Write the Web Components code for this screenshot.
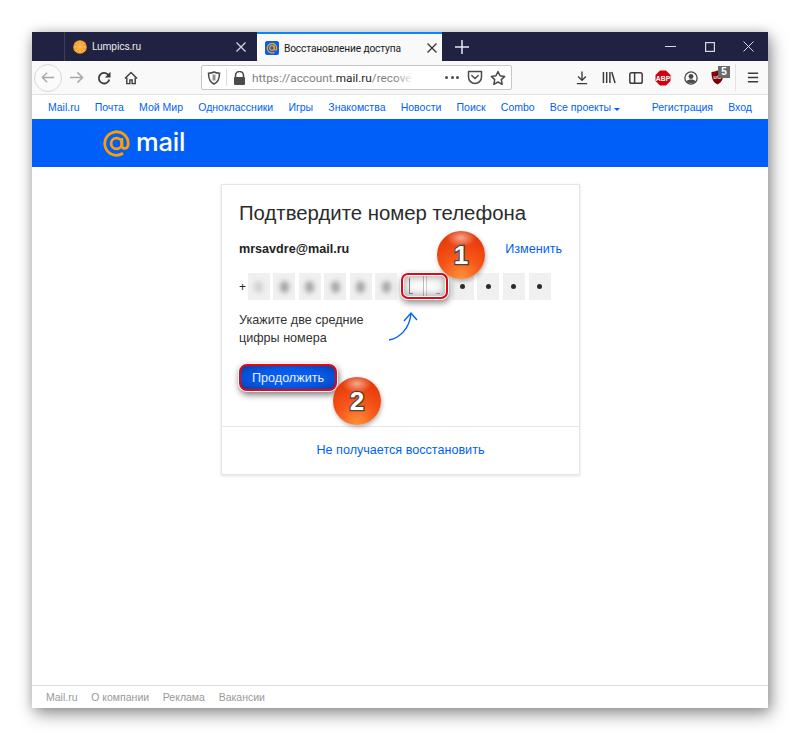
<!DOCTYPE html>
<html lang="ru">
<head>
<meta charset="utf-8">
<title>Восстановление доступа</title>
<style>
	html, body { margin: 0; padding: 0; background: #fff; }
	body { font-family: 'Liberation Sans', Arial, sans-serif; }
</style>
</head>
<body>
<browser-window>
	<browser-tabs></browser-tabs>
	<browser-toolbar></browser-toolbar>
	<site-nav></site-nav>
	<site-header></site-header>
	<recovery-card></recovery-card>
	<site-footer></site-footer>
</browser-window>

<script>
function define(name, html) {
	customElements.define(name, class extends HTMLElement {
		constructor() {
			super();
			this.attachShadow({mode: 'open'}).innerHTML = html;
		}
	});
}

define('browser-window', `
	<style>
		:host {
			display: flex;
			flex-direction: column;
			width: 736px;
			height: 676px;
			margin: 32px;
			background: #fff;
			box-shadow: 3px 6px 16px rgba(0,0,0,.42), 0 0 10px rgba(0,0,0,.14);
		}
	</style>
	<slot></slot>
`);

define('tab-close', `
	<style>
		:host { display: flex; width: 12px; height: 12px; }
		svg { display: block; }
	</style>
	<svg width="12" height="12" viewBox="0 0 12 12" fill="none" stroke="currentColor" stroke-width="1.3"><path d="M1.5 1.5l9 9M10.5 1.5l-9 9"/></svg>
`);

define('browser-tabs', `
	<style>
		:host {
			display: flex;
			align-items: stretch;
			height: 29px;
			padding-left: 32px;
			background: #1f2240;
			font: 10.2px Roboto, sans-serif;
			letter-spacing: -.15px;
			flex: none;
		}
		.tab {
			display: flex;
			align-items: center;
			box-sizing: border-box;
			position: relative;
		}
		.off {
			width: 193px;
			padding: 0 10px 0 8px;
			border-left: 1px solid #3c3f5c;
			color: #e8e8ee;
		}
		.on {
			width: 185px;
			padding: 1px 4px 0 8px;
			background: #f9f9fa;
			border-top: 2px solid #0a84ff;
			color: #1a1a1a;
		}
		.label { margin-left: 5px; flex: 1; white-space: nowrap; overflow: hidden; }
		tab-close { color: #d4d4dc; }
		.on tab-close { color: #333; }
		.add { margin: 0 0 0 13px; align-self: center; display: block; }
		.controls { display: flex; align-items: center; margin-left: auto; color: #d8d8e0; }
		.controls span { display: flex; width: 39px; justify-content: center; }
		.controls svg { display: block; }
	</style>
	<div class="tab off">
		<svg width="14" height="14" viewBox="0 0 14 14"><circle cx="7" cy="7" r="6.8" fill="#f7a02c"/><path d="M7 1v12M1 7h12M3 3l8 8M11 3l-8 8" stroke="#fcc878" stroke-width=".8"/></svg>
		<span class="label">Lumpics.ru</span>
		<tab-close></tab-close>
	</div>
	<div class="tab on">
		<svg width="14" height="14" viewBox="0 0 14 14"><rect width="14" height="14" rx="2" fill="#005ff9"/><circle cx="7" cy="7" r="2.3" fill="none" stroke="#ff9e00" stroke-width="1.3"/><path d="M9.3 4.7v3.2c0 1.7 2.4 1.7 2.4-.5A4.7 4.7 0 1 0 9.5 11.2" fill="none" stroke="#ff9e00" stroke-width="1.3"/></svg>
		<span class="label">Восстановление доступа</span>
		<tab-close></tab-close>
	</div>
	<svg class="add" width="14" height="14" viewBox="0 0 14 14" stroke="#e8e8ee" stroke-width="1.5"><path d="M7 0v14M0 7h14"/></svg>
	<div class="controls">
		<span><svg width="11" height="11" viewBox="0 0 11 11" stroke="currentColor"><path d="M0 5.5h11"/></svg></span>
		<span><svg width="10" height="10" viewBox="0 0 10 10" fill="none" stroke="currentColor" stroke-width="1.2"><rect x=".6" y=".6" width="8.8" height="8.8"/></svg></span>
		<span><svg width="11" height="11" viewBox="0 0 11 11" stroke="currentColor"><path d="M.5.5l10 10M10.5.5l-10 10"/></svg></span>
	</div>
`);

define('tool-icon', `
	<style>
		:host { display: flex; align-items: center; justify-content: center; flex: none; width: var(--w, 27px); height: 24px; position: relative; color: #3b3b3d; }
	</style>
	<slot></slot>
`);

define('address-bar', `
	<style>
		:host {
			display: flex;
			align-items: center;
			box-sizing: border-box;
			width: 311px;
			height: 25px;
			background: #fff;
			border: 1px solid #c6c6c8;
			border-radius: 2px;
			color: #4a4a4f;
			flex: none;
		}
		svg { display: block; flex: none; }
		.sep { width: 1px; height: 17px; background: #dcdcde; margin: 0 6px 0 5px; flex: none; }
		.url {
			position: relative;
			margin-left: 6px;
			width: 189px;
			white-space: nowrap;
			font: 11.8px Roboto, sans-serif;
			color: #7f7f82;
			flex: none;
		}
		.url::after {
			content: '';
			position: absolute;
			top: 0;
			bottom: 0;
			right: 0;
			width: 46px;
			background: linear-gradient(to right, rgba(255,255,255,0), #fff 40%);
		}
		.url b { font-weight: 400; color: #1f1f22; }
		.dots { margin-left: 4px; font-size: 0; display: flex; gap: 2.5px; }
		.dots i { width: 3px; height: 3px; border-radius: 50%; background: #4a4a4f; display: block; }
	</style>
	<svg style="margin-left:5px" width="14" height="14" viewBox="0 0 14 14" fill="none" stroke="#4a4a4f" stroke-width="1.5"><path d="M7 1c2 1 3.5 1.2 5.5 1.2 0 5-1 8.8-5.5 10.8C2.5 11 1.5 7.2 1.5 2.2 3.5 2.2 5 2 7 1z"/><path d="M7 3.5v6" stroke-width="3" stroke="#8f8f92"/></svg>
	<div class="sep"></div>
	<svg width="13" height="14" viewBox="0 0 13 14"><path d="M2.5 6V4.5a4 4 0 0 1 8 0V6" fill="none" stroke="#4a4a4f" stroke-width="1.6"/><rect x="1" y="6" width="11" height="8" rx="1" fill="#4a4a4f"/></svg>
	<span class="url">https://account.<b>mail.ru</b>/recovery</span>
	<div class="dots"><i></i><i></i><i></i></div>
	<svg style="margin-left:8px" width="16" height="15" viewBox="0 0 16 15" fill="none" stroke="#4a4a4f" stroke-width="1.5"><path d="M1.5 1.5h13v5.5a6.5 6.5 0 0 1-13 0z" stroke-linejoin="round"/><path d="M4.8 5.5L8 8.5l3.2-3" stroke-linecap="round"/></svg>
	<svg style="margin-left:7px" width="16" height="16" viewBox="0 0 16 16" fill="none" stroke="#4a4a4f" stroke-width="1.5"><path d="M8 1.5l2 4.3 4.7.6-3.4 3.2.9 4.7L8 12l-4.2 2.3.9-4.7L1.3 6.4 6 5.8z" stroke-linejoin="round"/></svg>
`);

define('browser-toolbar', `
	<style>
		:host {
			display: flex;
			align-items: center;
			height: 34px;
			padding-left: 2px;
			box-sizing: border-box;
			background: #f9f9fa;
			border-bottom: 1px solid #e3e3e5;
			flex: none;
		}
		.back {
			width: 26px;
			height: 26px;
			border: 1px solid #d8d8da;
			border-radius: 50%;
			background: #fbfbfb;
			display: flex;
			align-items: center;
			justify-content: center;
			flex: none;
		}
		svg { display: block; }
		address-bar { margin-left: 55px; }
		.sep { width: 1px; height: 27px; background: #e2e2e4; margin: 0 4px 0 7px; flex: none; }
		.badge {
			position: absolute;
			left: 12px;
			top: 0;
			width: 12px;
			height: 12px;
			background: #6a6a6e;
			color: #fff;
			font: bold 10px/12px 'Liberation Sans', sans-serif;
			text-align: center;
		}
		.gap { width: 56px; flex: none; }
	</style>
	<div class="back"><svg width="14" height="13" viewBox="0 0 16 14" fill="none" stroke="#a9a9ab" stroke-width="1.6"><path d="M15 7H1.5M7 1.5L1.5 7 7 12.5"/></svg></div>
	<tool-icon style="--w:29px"><svg width="15" height="13" viewBox="0 0 16 14" fill="none" stroke="#a9a9ab" stroke-width="1.6"><path d="M1 7h13.5M9 1.5L14.5 7 9 12.5"/></svg></tool-icon>
	<tool-icon style="--w:25px"><svg width="14" height="14" viewBox="0 0 14 14" fill="none" stroke="#3b3b3d" stroke-width="1.8"><path d="M12.3 8.5A5.3 5.3 0 1 1 10.8 3.3L12 4.5"/><path d="M13.5 .8v5.7H7.8z" fill="#3b3b3d" stroke="none"/></svg></tool-icon>
	<tool-icon style="--w:30px"><svg width="14" height="14" viewBox="0 0 15 14" fill="none" stroke="#3b3b3d" stroke-width="1.5"><path d="M1 7.5L7.5 1.2 14 7.5" stroke-linejoin="round"/><path d="M3 6.5V13h3.3V9h2.4v4H12V6.5"/></svg></tool-icon>
	<address-bar></address-bar>
	<div class="gap"></div>
	<tool-icon style="--w:27px"><svg width="12" height="14" viewBox="0 0 14 15" fill="none" stroke="#3b3b3d" stroke-width="1.6"><path d="M7 0v10M2.5 5.8L7 10.3l4.5-4.5M1 14h12"/></svg></tool-icon>
	<tool-icon style="--w:27px"><svg width="14" height="13" viewBox="0 0 15 14" fill="none" stroke="#3b3b3d" stroke-width="1.6"><path d="M1.5 1v12M5 1v12M8.5 1v12M10.5 1l3.5 12"/></svg></tool-icon>
	<tool-icon style="--w:27px"><svg width="14" height="12" viewBox="0 0 15 13" fill="none" stroke="#3b3b3d" stroke-width="1.6"><rect x=".8" y=".8" width="13.4" height="11.4" rx="2"/><path d="M6 1v11"/></svg></tool-icon>
	<tool-icon style="--w:27px"><svg width="16" height="16" viewBox="0 0 16 16"><path d="M5 .5h6L15.500 5v6L11 15.500H5L.5 11V5z" fill="#d3000b"/><text x="8" y="10.500" font-size="6.800" font-weight="bold" font-family="Liberation Sans, sans-serif" fill="#fff" text-anchor="middle">ABP</text></svg></tool-icon>
	<tool-icon style="--w:30px"><svg width="14" height="14" viewBox="0 0 16 16"><circle cx="8" cy="8" r="7" fill="#fff" stroke="#4a4a4f" stroke-width="1.5"/><circle cx="8" cy="6.300" r="2.800" fill="#4a4a4f"/><path d="M3 12c1-3 9-3 10 0-2 2.500-8 2.500-10 0z" fill="#4a4a4f"/></svg></tool-icon>
	<tool-icon style="--w:22px"><svg width="13" height="15" viewBox="0 0 14 16"><path d="M7 .5c2 1 4 1.500 6.500 1.500 0 6.500-1.500 11-6.500 13.500C2 13 .5 8.500.5 2 3 2 5 1.500 7 .5z" fill="#800000"/><text x="7" y="10" font-size="6.500" font-weight="bold" font-family="Liberation Sans, sans-serif" fill="#f2dcdc" text-anchor="middle">uO</text></svg><span class="badge">5</span></tool-icon>
	<div class="sep"></div>
	<tool-icon style="--w:25px"><svg width="12" height="11" viewBox="0 0 14 12" stroke="#3b3b3d" stroke-width="1.6"><path d="M1 1h12M1 6h12M1 11h12"/></svg></tool-icon>
`);

define('site-nav', `
	<style>
		:host {
			display: flex;
			align-items: center;
			height: 24px;
			padding: 0 16px;
			background: #fff;
			font: 10.5px 'Liberation Sans', sans-serif;
			color: #005ff9;
			gap: 15.2px;
			white-space: nowrap;
			flex: none;
		}
		.arrow {
			display: inline-block;
			width: 0;
			height: 0;
			margin-left: 3px;
			vertical-align: 0;
			border: 3.5px solid transparent;
			border-top: 3.5px solid #005ff9;
			border-bottom: 0;
		}
		.right { margin-left: auto; }
	</style>
	<span>Mail.ru</span><span>Почта</span><span>Мой Мир</span><span>Одноклассники</span><span>Игры</span><span>Знакомства</span><span>Новости</span><span>Поиск</span><span>Combo</span><span>Все проекты<i class="arrow"></i></span>
	<span class="right">Регистрация</span><span>Вход</span>
`);

define('site-header', `
	<style>
		:host {
			display: flex;
			align-items: center;
			height: 48px;
			padding-left: 71px;
			background: #005ff9;
			flex: none;
		}
		svg { display: block; flex: none; }
		span {
			margin-left: 6px;
			font: 500 25.5px/1 Inter, sans-serif;
			letter-spacing: -.2px;
			color: #fff;
			position: relative;
			top: -1px;
		}
	</style>
	<svg width="27" height="27" viewBox="0 0 29 29" fill="none" stroke="#ff9e00" stroke-width="3"><circle cx="14.5" cy="14.5" r="5.8"/><path d="M20.3 8.7v7.8c0 4.8 6.8 4.6 6.8-2A12.6 12.6 0 1 0 21.5 25"/></svg>
	<span>mail</span>
`);

define('digit-box', `
	<style>
		:host {
			display: flex;
			align-items: center;
			justify-content: center;
			width: 22px;
			height: 27px;
			background: #f0f0f0;
			flex: none;
		}
		i { display: block; border-radius: 50%; }
		:host([blur]) i { width: 9px; height: 12px; background: #a2a2a2; filter: blur(2.5px); }
		:host([dot]) i { width: 5px; height: 5px; background: #2a2a30; }
		:host([faint]) i { background: #cfcfcf; }
	</style>
	<i></i>
`);

define('num-badge', `
	<style>
		:host {
			display: flex;
			align-items: center;
			justify-content: center;
			position: absolute;
			width: 48px;
			height: 48px;
			border-radius: 50%;
			background:
				radial-gradient(ellipse 15px 9px at 50% 14%, rgba(255,255,255,.55), transparent),
				radial-gradient(circle at 50% 95%, #ff9038 0, #f6581a 38%, #ea3f0c 72%, #d83208 100%);
			box-shadow: 1px 2px 4px rgba(0,0,0,.3);
			font: bold 26px 'Liberation Sans', sans-serif;
			color: #fff;
			-webkit-text-stroke: 2.5px #444;
			paint-order: stroke fill;
		}
	</style>
	<slot></slot>
`);

define('recovery-card', `
	<style>
		:host {
			display: block;
			flex: 1;
			padding: 17px 0 0 189px;
			color: #222;
			font: 12.6px 'Liberation Sans', sans-serif;
		}
		.card {
			position: relative;
			box-sizing: border-box;
			width: 359px;
			height: 291px;
			border: 1px solid #e6e6e6;
			box-shadow: 0 1px 3px rgba(0,0,0,.12);
			background: #fff;
		}
		.body { padding: 15px 17px 35px; height: 241px; box-sizing: border-box; }
		h1 { margin: 0; font: 400 20.35px/26px 'Liberation Sans', sans-serif; color: #2b2b2b; white-space: nowrap; }
		.mail {
			display: flex;
			justify-content: space-between;
			align-items: center;
			height: 18px;
			margin-top: 14px;
			font-weight: bold;
		}
		.mail a { font-weight: 400; color: #005ff9; }
		.digits { display: flex; align-items: center; margin-top: 15px; gap: 3.55px; }
		.plus { width: 8.5px; font-size: 12px; flex: none; margin-right: -3.55px; }
		.hl {
			display: flex;
			gap: 3.55px;
			position: relative;
			flex: none;
		}
		.hl::after {
			content: '';
			position: absolute;
			inset: 0 0 1px 0;
			border: 2px solid #e30613;
			border-radius: 7px;
			box-shadow: 0 0 0 1px #fff, 1px 3px 6px 1px rgba(0,0,0,.45), inset 0 0 0 1px #fff, inset 0 0 7px 3px rgba(0,0,0,.28);
		}
		.hl digit-box { background: #fbfbfb; }
		.hl u { position: absolute; background: #8a8a8a; }
		.hint { margin: 11px 0 0; line-height: 18px; color: #333; }
		button {
			display: block;
			box-sizing: border-box;
			width: 98px;
			height: 27px;
			margin: 17px 0 0 0;
			padding: 1px 0 0;
			border: 2px solid #e30613;
			border-radius: 8px;
			background: radial-gradient(ellipse at 50% 50%, #0a62f0 0, #0658e6 55%, #0a3fa8 100%);
			box-shadow: 0 0 0 1px #fff, 1px 3px 6px 1px rgba(0,0,0,.5);
			color: #e8eeff;
			font: 12.6px 'Liberation Sans', sans-serif;
		}
		.foot {
			height: 48px;
			border-top: 1px solid #e6e6e6;
			box-sizing: border-box;
			display: flex;
			align-items: center;
			justify-content: center;
			color: #005ff9;
			padding-bottom: 2px;
		}
		.arrow { position: absolute; left: 163px; top: 123px; display: block; }
		.one { left: 215px; top: 46px; }
		.two { left: 111px; top: 192px; }
	</style>
	<div class="card">
		<div class="body">
			<h1>Подтвердите номер телефона</h1>
			<div class="mail"><span>mrsavdre@mail.ru</span><a>Изменить</a></div>
			<div class="digits">
				<span class="plus">+</span>
				<digit-box blur faint></digit-box><digit-box blur></digit-box><digit-box blur></digit-box><digit-box blur></digit-box><digit-box blur></digit-box><digit-box blur></digit-box>
				<div class="hl">
					<digit-box></digit-box><digit-box></digit-box>
					<u style="left:8px;top:5px;width:1px;height:16px"></u><u style="left:8px;top:20px;width:4px;height:1px"></u>
					<u style="left:22px;top:3px;width:1px;height:20px;background:#bdbdbd"></u><u style="left:25px;top:3px;width:1px;height:20px;background:#cfcfcf"></u>
					<u style="left:35px;top:20px;width:4px;height:1px;background:#aaa"></u>
				</div>
				<digit-box dot></digit-box><digit-box dot></digit-box><digit-box dot></digit-box><digit-box dot></digit-box>
			</div>
			<p class="hint">Укажите две средние<br>цифры номера</p>
			<button>Продолжить</button>
		</div>
		<div class="foot">Не получается восстановить</div>
		<svg class="arrow" width="34" height="36" viewBox="0 0 34 36" fill="none" stroke="#005ff9" stroke-width="1.4"><path d="M4 32C15 30 25 20 26 5"/><path d="M19 13l7-8 6 7"/></svg>
		<num-badge class="one">1</num-badge>
		<num-badge class="two">2</num-badge>
	</div>
`);

define('site-footer', `
	<style>
		:host {
			display: flex;
			align-items: center;
			height: 22px;
			padding: 0 14px;
			gap: 13.7px;
			border-top: 1px solid #dedede;
			font: 10.5px 'Liberation Sans', sans-serif;
			color: #999;
			flex: none;
		}
	</style>
	<span>Mail.ru</span><span>О компании</span><span>Реклама</span><span>Вакансии</span>
`);
</script>
</body>
</html>
